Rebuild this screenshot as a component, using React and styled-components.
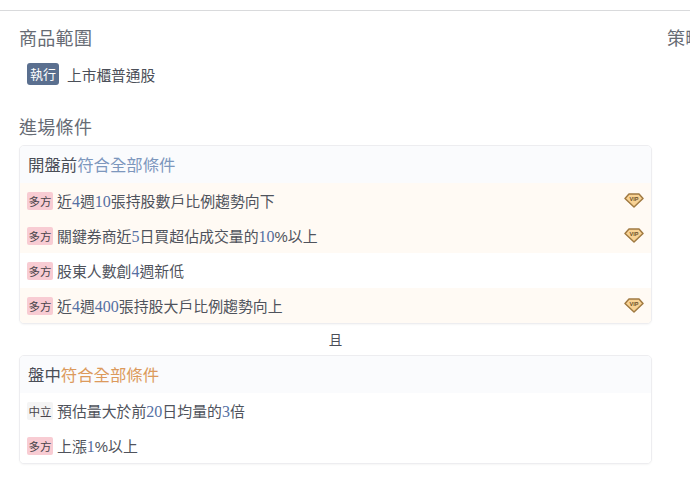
import React from "react";
import styled, { createGlobalStyle } from "styled-components";

const GlobalStyle = createGlobalStyle`
  html, body {
    margin: 0;
    padding: 0;
    background: #fff;
    overflow: hidden;
  }
  body {
    font-family: "Noto Sans CJK TC", "Liberation Sans", sans-serif;
    color: #4a5160;
  }
`;

const Page = styled.div`
  width: 690px;
  height: 480px;
  overflow: hidden;
  box-sizing: border-box;
  margin-top: 10px;
  border-top: 1px solid #d9dadc;
  display: flex;
`;

const MainColumn = styled.div`
  width: 633px;
  flex: none;
  margin-left: 19px;
`;

const SideColumn = styled.div`
  flex: none;
  width: 100px;
  margin-left: 15px;
`;

const Title = styled.h2`
  margin: 0;
  font-size: 18px;
  line-height: 26px;
  font-weight: 400;
  color: #666b74;
  letter-spacing: 0.3px;
`;

const TopTitle = styled(Title)`
  margin-top: 13px;
`;

const ScopeRow = styled.div`
  display: flex;
  align-items: center;
  gap: 8px;
  margin: 12px 0 0 8px;
  height: 24px;
  font-size: 14.7px;
  color: #4b4f58;
`;

const RunBadge = styled.span`
  width: 32px;
  height: 22px;
  border-radius: 3px;
  background: #5a6f8f;
  color: #fff;
  font-size: 13px;
  line-height: 22px;
  text-align: center;
`;

const EntryTitle = styled(Title)`
  margin-top: 27px;
`;

const Card = styled.section`
  margin-top: ${(p) => p.$top}px;
  border: 1px solid #ededf0;
  border-radius: 5px;
  overflow: hidden;
  background: #fff;
  box-shadow: 0 1px 2px rgba(0, 0, 0, 0.04);
`;

const CardHeader = styled.div`
  height: 37px;
  padding: 0 0 1px 8px;
  box-sizing: border-box;
  display: flex;
  align-items: center;
  background: #fafbfd;
  font-size: 16.4px;
  color: #4a4e57;
`;

const MatchText = styled.span`
  color: ${(p) => p.$color};
`;

const Row = styled.div`
  height: 35px;
  display: flex;
  align-items: center;
  padding: 0 8px 0 7px;
  background: ${(p) => (p.$vip ? "#fffaf4" : "#fff")};
  font-size: 14.9px;
  color: #4f535c;
`;

const Tag = styled.span`
  flex: none;
  width: 26px;
  height: 18px;
  margin: 1px 4px 0 0;
  border-radius: 2px;
  background: ${(p) => (p.$kind === "long" ? "#f8ccd3" : "#f4f4f4")};
  color: #48444a;
  font-size: 11.5px;
  line-height: 18px;
  text-align: center;
`;

const Num = styled.span`
  font-family: "Liberation Serif", serif;
  font-size: 16px;
  color: #5570a3;
`;

const Percent = styled.span`
  font-family: "Liberation Sans", sans-serif;
`;

const VipWrap = styled.span`
  margin-left: auto;
  margin-right: -1px;
  display: flex;
`;

const Joiner = styled.div`
  height: 31px;
  line-height: 31px;
  text-align: center;
  font-size: 13.5px;
  color: #4a4e57;
`;

const VipIcon = () => (
  <VipWrap>
    <svg width="20" height="15" viewBox="0 0 20 15">
      <path
        d="M5 1h10l4 4.5L10 14 1 5.5z"
        fill="#f8d294"
        stroke="#a07a42"
        strokeWidth="1.5"
        strokeLinejoin="round"
      />
      <text
        x="10"
        y="7.8"
        textAnchor="middle"
        fontSize="5.5"
        fontWeight="700"
        fontFamily="Liberation Sans, sans-serif"
        fill="#6e5128"
      >
        VIP
      </text>
    </svg>
  </VipWrap>
);

const Condition = ({ kind = "long", vip, children }) => (
  <Row $vip={vip}>
    <Tag $kind={kind}>{kind === "long" ? "多方" : "中立"}</Tag>
    <span>{children}</span>
    {vip && <VipIcon />}
  </Row>
);

export default function App() {
  return (
    <Page>
      <GlobalStyle />
      <MainColumn>
        <TopTitle>商品範圍</TopTitle>
        <ScopeRow>
          <RunBadge>執行</RunBadge>
          上市櫃普通股
        </ScopeRow>
        <EntryTitle>進場條件</EntryTitle>
        <Card $top={6}>
          <CardHeader>
            開盤前<MatchText $color="#7d97bd">符合全部條件</MatchText>
          </CardHeader>
          <Condition vip>
            近<Num>4</Num>週<Num>10</Num>張持股數戶比例趨勢向下
          </Condition>
          <Condition vip>
            關鍵券商近<Num>5</Num>日買超佔成交量的<Num>10</Num><Percent>%</Percent>以上
          </Condition>
          <Condition>
            股東人數創<Num>4</Num>週新低
          </Condition>
          <Condition vip>
            近<Num>4</Num>週<Num>400</Num>張持股大戶比例趨勢向上
          </Condition>
        </Card>
        <Joiner>且</Joiner>
        <Card $top={0}>
          <CardHeader>
            盤中<MatchText $color="#dc9a5c">符合全部條件</MatchText>
          </CardHeader>
          <Condition kind="neutral">
            預估量大於前<Num>20</Num>日均量的<Num>3</Num>倍
          </Condition>
          <Condition>
            上漲<Num>1</Num><Percent>%</Percent>以上
          </Condition>
        </Card>
      </MainColumn>
      <SideColumn>
        <TopTitle>策略</TopTitle>
      </SideColumn>
    </Page>
  );
}
